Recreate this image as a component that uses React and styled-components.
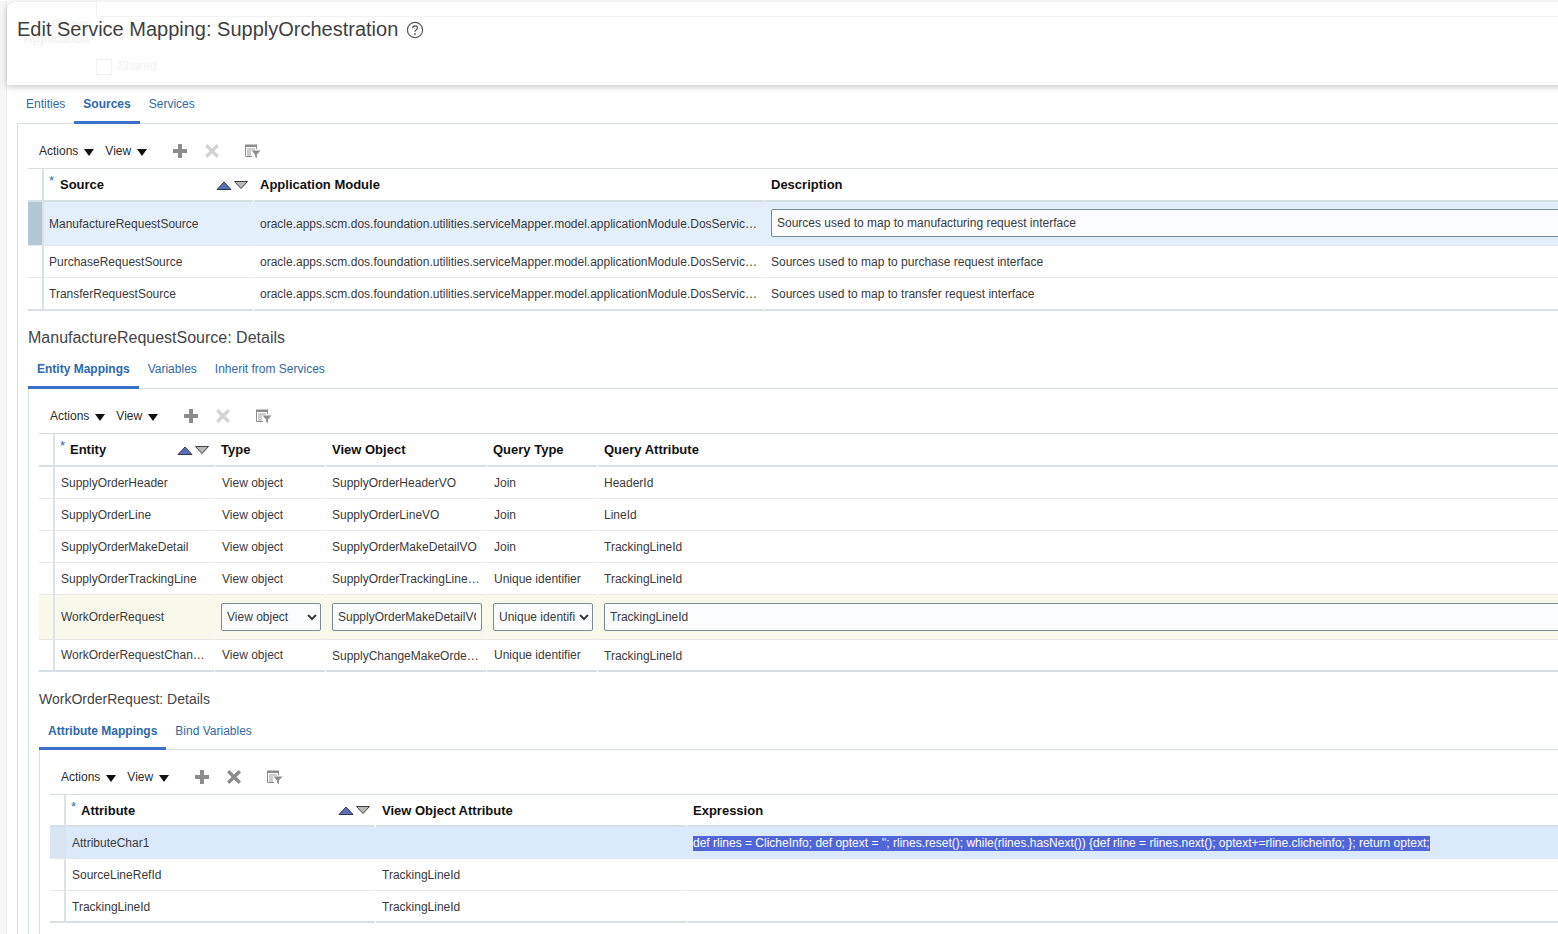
import React from 'react';
import styled, { createGlobalStyle } from 'styled-components';

const Global = createGlobalStyle`
  html, body { margin: 0; padding: 0; height: 934px; overflow: hidden; background: #fff; }
  body { font-family: "Liberation Sans", Arial, sans-serif; font-size: 12px; color: #3a3a3a; }
  #root { width: 1558px; height: 934px; overflow: hidden; }
`;

const Page = styled.div`
  width: 1600px;
  height: 934px;
  background: linear-gradient(90deg, #f6f6f6 0, #f6f6f6 6px, #ececec 6px, #ececec 7px, #fff 7px);
`;

const HeaderCard = styled.header`
  position: relative;
  margin: 1px 0 0 7px;
  height: 84px;
  background: #fff;
  border-top: 1px solid #eee;
  border-top-left-radius: 8px;
  box-shadow: 0 2px 6px rgba(0, 0, 0, 0.22);
  display: flex;
  align-items: flex-start;
  gap: 8px;
  padding: 13px 0 0 10px;
  box-sizing: border-box;
`;

const PageTitle = styled.h1`
  margin: 0;
  position: relative;
  font-weight: 400;
  font-size: 20px;
  line-height: 28px;
  color: #3f3f3f;
`;

const HelpIcon = styled.svg`
  position: relative;
  width: 18px;
  height: 18px;
  margin-top: 6px;
`;

const GhostBox = styled.div`
  position: absolute;
  left: 89px;
  top: -1px;
  right: 0;
  height: 14px;
  border: 1px solid #f3f3f3;
`;

const GhostCheck = styled.div`
  position: absolute;
  left: 89px;
  top: 57px;
  width: 14px;
  height: 14px;
  border: 1px solid #f2f2f2;
`;

const GhostLabel = styled.span`
  position: absolute;
  left: ${p => p.$x}px;
  top: ${p => p.$y}px;
  font-size: 12px;
  font-weight: ${p => (p.$bold ? 700 : 400)};
  color: #f3f3f3;
`;

const TabBar = styled.nav`
  display: flex;
  height: ${p => p.$h}px;
  align-items: flex-end;
  position: relative;
  z-index: 1;
`;

const Tab = styled.a`
  box-sizing: border-box;
  height: 100%;
  padding: 0 9px ${p => p.$bottom ?? 10}px;
  display: flex;
  align-items: flex-end;
  margin-bottom: -1px;
  font-size: 12px;
  line-height: 14px;
  font-weight: ${p => (p.$active ? 700 : 400)};
  color: ${p => (p.$active ? '#2e69ac' : '#33699f')};
  border-bottom: 3px solid ${p => (p.$active ? '#3a70c6' : 'transparent')};
`;

const Panel = styled.section`
  border-top: 1px solid #d6dfe6;
  border-left: 1px solid #d6dfe6;
  padding-left: 10px;
  padding-bottom: 40px;
`;

const Level = styled.div`
  margin-left: ${p => p.$left}px;
`;

const Toolbar = styled.div`
  height: 45px;
  box-sizing: border-box;
  border-bottom: 1px solid #d6dfe6;
  display: flex;
  align-items: center;
  padding: 10px 0 0 11px;
`;

const MenuButton = styled.button`
  all: unset;
  display: flex;
  align-items: center;
  gap: 6px;
  font-size: 12px;
  color: #2b2b2b;
  margin-right: 11px;
`;

const MenuArrow = styled.i`
  width: 0;
  height: 0;
  border-left: 5px solid transparent;
  border-right: 5px solid transparent;
  border-top: 7px solid #111;
  margin-top: 2px;
`;

const ToolIcon = styled.svg`
  display: block;
  width: ${p => p.$w || 16}px;
  height: 16px;
  margin-left: ${p => p.$gap}px;
`;

const Grid = styled.div`
  display: flex;
  flex-direction: column;
`;

const Row = styled.div`
  display: grid;
  grid-template-columns: ${p => p.$columns};
  height: ${p => p.$h}px;
  background: ${p => p.$bg || 'transparent'};
`;

const Gutter = styled.div`
  background: ${p => p.$bg || 'transparent'};
  border-right: 2px solid #dbe3ea;
  border-bottom: ${p => (p.$heavy ? 2 : 1)}px solid ${p => (p.$heavy ? '#d6dfe6' : '#e8e8e8')};
`;

const Cell = styled.div`
  min-width: 0;
  box-sizing: border-box;
  margin-right: 1px;
  display: flex;
  align-items: center;
  padding: 0 ${p => p.$right ?? 4}px 0 ${p => p.$pad ?? 6}px;
  border-bottom: ${p => (p.$heavy ? 2 : 1)}px solid ${p => (p.$heavy ? '#d6dfe6' : '#e8e8e8')};
  color: #3a3a3a;
  font-size: 12px;
`;

const CellText = styled.span`
  display: block;
  white-space: nowrap;
  overflow: hidden;
  text-overflow: ellipsis;
  min-width: 0;
  transform: translateY(${p => p.$drop || 0}px);
`;

const HeadCell = styled.div`
  box-sizing: border-box;
  margin-right: 1px;
  display: flex;
  align-items: center;
  padding: 0 5px 0 ${p => p.$pad ?? 6}px;
  border-bottom: 2px solid #d6dfe6;
  font-size: 13px;
  font-weight: 700;
  color: #111;
`;

const Required = styled.span`
  color: #2f6db5;
  font-size: 13px;
  font-weight: 400;
  width: ${p => p.$w}px;
  align-self: flex-start;
  margin-top: 5px;
  line-height: 13px;
`;

const HeadLabel = styled.span`
  flex: 1;
  white-space: nowrap;
`;

const SortIcon = styled.svg`
  width: 32px;
  height: 12px;
  flex: none;
`;

const SectionTitle = styled.h2`
  margin: 0;
  font-size: ${p => p.$size}px;
  font-weight: 400;
  color: #454545;
  line-height: 20px;
  padding-top: ${p => p.$top}px;
`;

const fieldCss = `
  box-sizing: border-box;
  width: 100%;
  height: 28px;
  border: 1px solid #7a8b99;
  border-radius: 2px;
  background: #fbfcfe;
  font-family: "Liberation Sans", Arial, sans-serif;
  font-size: 12px;
  color: #3a3a3a;
  outline: none;
`;

const TextField = styled.input`
  ${fieldCss}
  padding: ${p => p.$lift ? 1 : 0}px 5px 0;
  margin-bottom: ${p => p.$lift || 0}px;
`;

const SelectField = styled.select`
  ${fieldCss}
  padding: 0 1px;
`;

const Selected = styled.span`
  background: #5066d8;
  color: #fff;
  line-height: 15px;
  display: inline-block;
  white-space: nowrap;
  transform: translateY(1px);
`;

const Plus = ({ gap }) => (
  <ToolIcon $gap={gap} viewBox="0 0 16 16">
    <path d="M6 1h4v5h5v4h-5v5H6v-5H1V6h5z" fill="#8c8c8c" />
  </ToolIcon>
);

const Cross = ({ gap, on }) => (
  <ToolIcon $gap={gap} viewBox="0 0 16 16">
    <path d="M3.4 1 8 5.6 12.6 1 15 3.4 10.4 8 15 12.6 12.6 15 8 10.4 3.4 15 1 12.6 5.6 8 1 3.4z" fill={on ? '#8c8c8c' : '#d4d4d4'} />
  </ToolIcon>
);

const QueryIcon = ({ gap }) => (
  <ToolIcon $gap={gap} $w={17} viewBox="0 0 17 16">
    <path d="M1 1.5h12v2.5H1z" fill="#8c8c8c" />
    <path d="M1.5 4v9.5H8M12.5 4v2" fill="none" stroke="#8c8c8c" />
    <path d="M3 6h8M3 8h4M3 10h4M3 12h4" stroke="#9a9a9a" />
    <path d="M7.5 7.5h9l-3.6 4v3.5l-1.8-1v-2.5z" fill="#8c8c8c" />
  </ToolIcon>
);

const Sort = () => (
  <SortIcon viewBox="0 0 32 12">
    <path d="M1 10.5 8 3l7 7.5z" fill="#5a6fb8" stroke="#2f3a4a" />
    <path d="M18.5 2.5h13L25 9.5z" fill="#b9b9b9" stroke="#3f3f3f" />
  </SortIcon>
);

const Tools = ({ deleteOn }) => (
  <Toolbar>
    <MenuButton>Actions<MenuArrow /></MenuButton>
    <MenuButton>View<MenuArrow /></MenuButton>
    <Plus gap={14} />
    <Cross gap={16} on={deleteOn} />
    <QueryIcon gap={24} />
  </Toolbar>
);

const Head = ({ columns, labels, h = 33, mark = 10 }) => (
  <Row $columns={columns} $h={h}>
    <Gutter $heavy />
    {labels.map((label, i) => (
      <HeadCell key={label} $pad={i === 0 ? 5 : 6}>
        {i === 0 && <Required $w={mark}>*</Required>}
        <HeadLabel>{label}</HeadLabel>
        {i === 0 && <Sort />}
      </HeadCell>
    ))}
  </Row>
);

const c1 = '16px 210px 511px 1fr';
const c2 = '16px 160px 111px 161px 111px 1fr';
const c3 = '16px 310px 311px 1fr';

const AM = 'oracle.apps.scm.dos.foundation.utilities.serviceMapper.model.applicationModule.DosServiceAM';

const Body = ({ columns, cells, last, first = 6, h = 32, drop }) => (
  <Row $columns={columns} $h={h}>
    <Gutter $heavy={last} />
    {cells.map((t, i) => (
      <Cell key={i} $heavy={last} $pad={i === 0 ? first : t.pad ?? 6} $right={t.right ?? (i === 0 ? 8 : 7)}>
        <CellText $drop={t.drop ?? drop}>{t.text ?? t}</CellText>
      </Cell>
    ))}
  </Row>
);

const type = { text: 'View object', pad: 7 };
const unique = { text: 'Unique identifier', pad: 7 };
const join = { text: 'Join', pad: 7 };

export default function App() {
  return (
    <Page>
      <Global />
      <HeaderCard>
        <GhostBox />
        <GhostCheck />
        <GhostLabel $x={111} $y={57}>Shared</GhostLabel>
        <GhostLabel $x={45} $y={15} $bold>Owner</GhostLabel>
        <GhostLabel $x={17} $y={30} $bold>Application</GhostLabel>
        <PageTitle>Edit Service Mapping: SupplyOrchestration</PageTitle>
        <HelpIcon viewBox="0 0 18 18">
          <circle cx="9" cy="9" r="7.6" fill="none" stroke="#555" strokeWidth="1.2" />
          <path d="M6.6 7.2c0-1.5 1.1-2.4 2.5-2.4s2.4.9 2.4 2.1c0 1.9-2.5 1.9-2.5 3.9" fill="none" stroke="#555" strokeWidth="1.2" />
          <circle cx="9" cy="13" r=".9" fill="#555" />
        </HelpIcon>
      </HeaderCard>

      <Level $left={17}>
        <TabBar $h={38}>
          <Tab>Entities</Tab>
          <Tab $active>Sources</Tab>
          <Tab>Services</Tab>
        </TabBar>
        <Panel>
          <Tools />
          <Grid>
            <Head columns={c1} mark={11} labels={['Source', 'Application Module', 'Description']} />
            <Row $columns={c1} $h={44} $bg="#e3effb">
              <Gutter $bg="#b3c6d6" />
              <Cell $pad={5}><CellText>ManufactureRequestSource</CellText></Cell>
              <Cell $right={4}><CellText>{AM}</CellText></Cell>
              <Cell><TextField $lift={2} readOnly value="Sources used to map to manufacturing request interface" /></Cell>
            </Row>
            <Body columns={c1} first={5} cells={['PurchaseRequestSource', { text: AM, right: 4 }, 'Sources used to map to purchase request interface']} />
            <Body columns={c1} first={5} last h={33} cells={['TransferRequestSource', { text: AM, right: 4 }, 'Sources used to map to transfer request interface']} />
          </Grid>

          <SectionTitle $top={17} $size={16}>ManufactureRequestSource: Details</SectionTitle>
          <TabBar $h={40}>
            <Tab $active>Entity Mappings</Tab>
            <Tab>Variables</Tab>
            <Tab>Inherit from Services</Tab>
          </TabBar>
          <Panel>
            <Tools />
            <Grid>
              <Head columns={c2} labels={['Entity', 'Type', 'View Object', 'Query Type', 'Query Attribute']} />
              <Body columns={c2} cells={['SupplyOrderHeader', type, 'SupplyOrderHeaderVO', join, 'HeaderId']} />
              <Body columns={c2} cells={['SupplyOrderLine', type, 'SupplyOrderLineVO', join, 'LineId']} />
              <Body columns={c2} cells={['SupplyOrderMakeDetail', type, 'SupplyOrderMakeDetailVO', join, 'TrackingLineId']} />
              <Body columns={c2} cells={['SupplyOrderTrackingLine', type, { text: 'SupplyOrderTrackingLineVO', right: 3 }, unique, 'TrackingLineId']} />
              <Row $columns={c2} $h={45} $bg="#f8f9ea">
                <Gutter />
                <Cell><CellText>WorkOrderRequest</CellText></Cell>
                <Cell $right={4}><SelectField defaultValue="View object"><option>View object</option></SelectField></Cell>
                <Cell $right={4}><TextField readOnly value="SupplyOrderMakeDetailVO" /></Cell>
                <Cell $right={4}><SelectField defaultValue="Unique identifier"><option>Unique identifier</option></SelectField></Cell>
                <Cell><TextField readOnly value="TrackingLineId" /></Cell>
              </Row>
              <Body columns={c2} last cells={['WorkOrderRequestChangeDetail', type, { text: 'SupplyChangeMakeOrderDetailVO', drop: 1 }, unique, { text: 'TrackingLineId', drop: 1 }]} />
            </Grid>

            <SectionTitle $top={17} $size={14}>WorkOrderRequest: Details</SectionTitle>
            <TabBar $h={40}>
              <Tab $active $bottom={9}>Attribute Mappings</Tab>
              <Tab $bottom={9}>Bind Variables</Tab>
            </TabBar>
            <Panel>
              <Tools deleteOn />
              <Grid>
                <Head columns={c3} h={32} labels={['Attribute', 'View Object Attribute', 'Expression']} />
                <Row $columns={c3} $h={32} $bg="#dbeafb">
                  <Gutter $bg="#d9e6f2" />
                  <Cell><CellText>AttributeChar1</CellText></Cell>
                  <Cell />
                  <Cell><Selected>def rlines = ClicheInfo; def optext = ''; rlines.reset(); while(rlines.hasNext()) {'{'}def rline = rlines.next(); optext+=rline.clicheinfo; {'}'}; return optext;</Selected></Cell>
                </Row>
                <Body columns={c3} cells={['SourceLineRefId', 'TrackingLineId', '']} />
                <Body columns={c3} last drop={1} cells={['TrackingLineId', 'TrackingLineId', '']} />
              </Grid>
            </Panel>
          </Panel>
        </Panel>
      </Level>
    </Page>
  );
}
